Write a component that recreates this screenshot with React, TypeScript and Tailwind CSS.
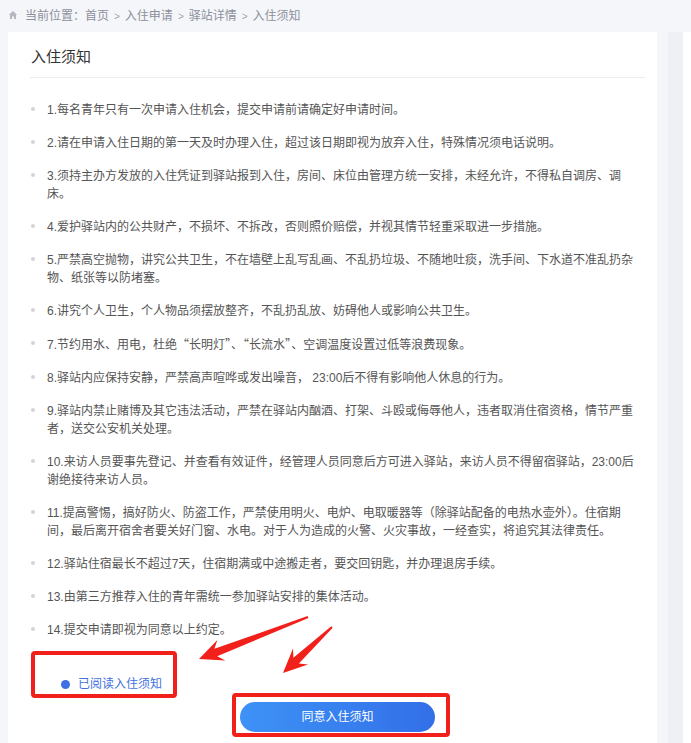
import React from 'react';

const RULES = [
  '1.每名青年只有一次申请入住机会，提交申请前请确定好申请时间。',
  '2.请在申请入住日期的第一天及时办理入住，超过该日期即视为放弃入住，特殊情况须电话说明。',
  '3.须持主办方发放的入住凭证到驿站报到入住，房间、床位由管理方统一安排，未经允许，不得私自调房、调床。',
  '4.爱护驿站内的公共财产，不损坏、不拆改，否则照价赔偿，并视其情节轻重采取进一步措施。',
  '5.严禁高空抛物，讲究公共卫生，不在墙壁上乱写乱画、不乱扔垃圾、不随地吐痰，洗手间、下水道不准乱扔杂物、纸张等以防堵塞。',
  '6.讲究个人卫生，个人物品须摆放整齐，不乱扔乱放、妨碍他人或影响公共卫生。',
  '7.节约用水、用电，杜绝“长明灯”、“长流水”、空调温度设置过低等浪费现象。',
  '8.驿站内应保持安静，严禁高声喧哗或发出噪音， 23:00后不得有影响他人休息的行为。',
  '9.驿站内禁止赌博及其它违法活动，严禁在驿站内酗酒、打架、斗殴或侮辱他人，违者取消住宿资格，情节严重者，送交公安机关处理。',
  '10.来访人员要事先登记、并查看有效证件，经管理人员同意后方可进入驿站，来访人员不得留宿驿站，23:00后谢绝接待来访人员。',
  '11.提高警惕，搞好防火、防盗工作，严禁使用明火、电炉、电取暖器等（除驿站配备的电热水壶外）。住宿期间，最后离开宿舍者要关好门窗、水电。对于人为造成的火警、火灾事故，一经查实，将追究其法律责任。',
  '12.驿站住宿最长不超过7天，住宿期满或中途搬走者，要交回钥匙，并办理退房手续。',
  '13.由第三方推荐入住的青年需统一参加驿站安排的集体活动。',
  '14.提交申请即视为同意以上约定。',
];

// curly quotes look full-width in the original, so give them the CJK font
const renderRule = (rule: string) =>
  rule.split(/([“”])/).map((part, i) =>
    part === '“' || part === '”' ? (
      <span key={i} className="font-['Noto_Sans_CJK_SC']">{part}</span>
    ) : (
      part
    ),
  );

// tapered annotation arrow, from tail (tx,ty) to tip (hx,hy)
function arrowPoints(tx: number, ty: number, hx: number, hy: number, head = 24, barb = 11) {
  const L = Math.hypot(hx - tx, hy - ty);
  const ux = (hx - tx) / L;
  const uy = (hy - ty) / L;
  const nx = -uy;
  const ny = ux;
  const p = (a: number, w: number) => `${(tx + ux * a + nx * w).toFixed(1)},${(ty + uy * a + ny * w).toFixed(1)}`;
  return [p(0, 1), p(L - head + 6, 4), p(L - head, barb), p(L, 0), p(L - head, -barb), p(L - head + 6, -4), p(0, -1)].join(' ');
}

const Crumbs = () => (
  <div className="h-[32px] flex items-center pl-[8px] text-[12px] text-[#8c909a]">
    <svg width="10" height="10" viewBox="0 0 10 10" className="mr-[7px] mb-[2px]">
      <path d="M5 1 L9.2 5 H8 V9 H6 V6.5 H4 V9 H2 V5 H0.8 Z" fill="#b4b8c0" />
    </svg>
    <span>当前位置：首页</span>
    <span className="px-[5px] text-[10px] text-[#a0a4ad]">&gt;</span>
    <span>入住申请</span>
    <span className="px-[5px] text-[10px] text-[#a0a4ad]">&gt;</span>
    <span>驿站详情</span>
    <span className="px-[5px] text-[10px] text-[#a0a4ad]">&gt;</span>
    <span>入住须知</span>
  </div>
);

export default function App() {
  return (
    <div
      className="relative h-[743px] w-[691px] overflow-hidden bg-[#f5f6fa] flex flex-col"
      style={{ fontFamily: '"Liberation Sans", "Noto Sans CJK SC", sans-serif' }}
    >
      <Crumbs />

      <div className="flex flex-1">
        <div className="ml-[8px] w-[649px] bg-white pl-[22px] pr-[12px] pt-[14px]">
          <div className="border-b border-[#ececf0] pb-[9px] pl-[1px] text-[15px] leading-[22px] text-[#333]">入住须知</div>

          <ul className="mt-[23px] pl-[1px]">
            {RULES.map((rule) => (
              <li key={rule} className="flex mb-[15px] text-[12px] leading-[18px] text-[#555]">
                <span className="mt-[6px] mr-[12px] h-[4px] w-[4px] shrink-0 rounded-full bg-[#d4d4d8]" />
                <span className="w-[597px]">{renderRule(rule)}</span>
              </li>
            ))}
          </ul>

          <div className="mt-[36px] flex items-center pl-[31px]">
            <span className="h-[9px] w-[9px] rounded-full bg-[#3f6fe2]" />
            <span className="ml-[8px] text-[12px] leading-[18px] text-[#4271e0]">已阅读入住须知</span>
          </div>

          <div className="mt-[9px] flex justify-center">
            <button className="h-[30px] w-[195px] rounded-full bg-gradient-to-r from-[#3e92f6] to-[#336fe8] text-[12px] text-white">
              同意入住须知
            </button>
          </div>
        </div>
        <div className="w-[11px]" />
        <div className="w-[15px] bg-[#eff0f5]" />
        <div className="flex-1 bg-white" />
      </div>

      {/* red annotations drawn over the page */}
      <div className="absolute left-[31px] top-[651px] h-[47px] w-[146px] rounded-[4px] border-[4px] border-[#f2201b] pointer-events-none" />
      <div className="absolute left-[232px] top-[693px] h-[44px] w-[218px] rounded-[4px] border-[4px] border-[#f2201b] pointer-events-none" />
      <svg className="absolute left-0 top-0 pointer-events-none" width="691" height="743">
        <polygon points={arrowPoints(308, 617, 199, 659)} fill="#f2201b" />
        <polygon points={arrowPoints(332, 627, 283, 673)} fill="#f2201b" />
      </svg>
    </div>
  );
}
